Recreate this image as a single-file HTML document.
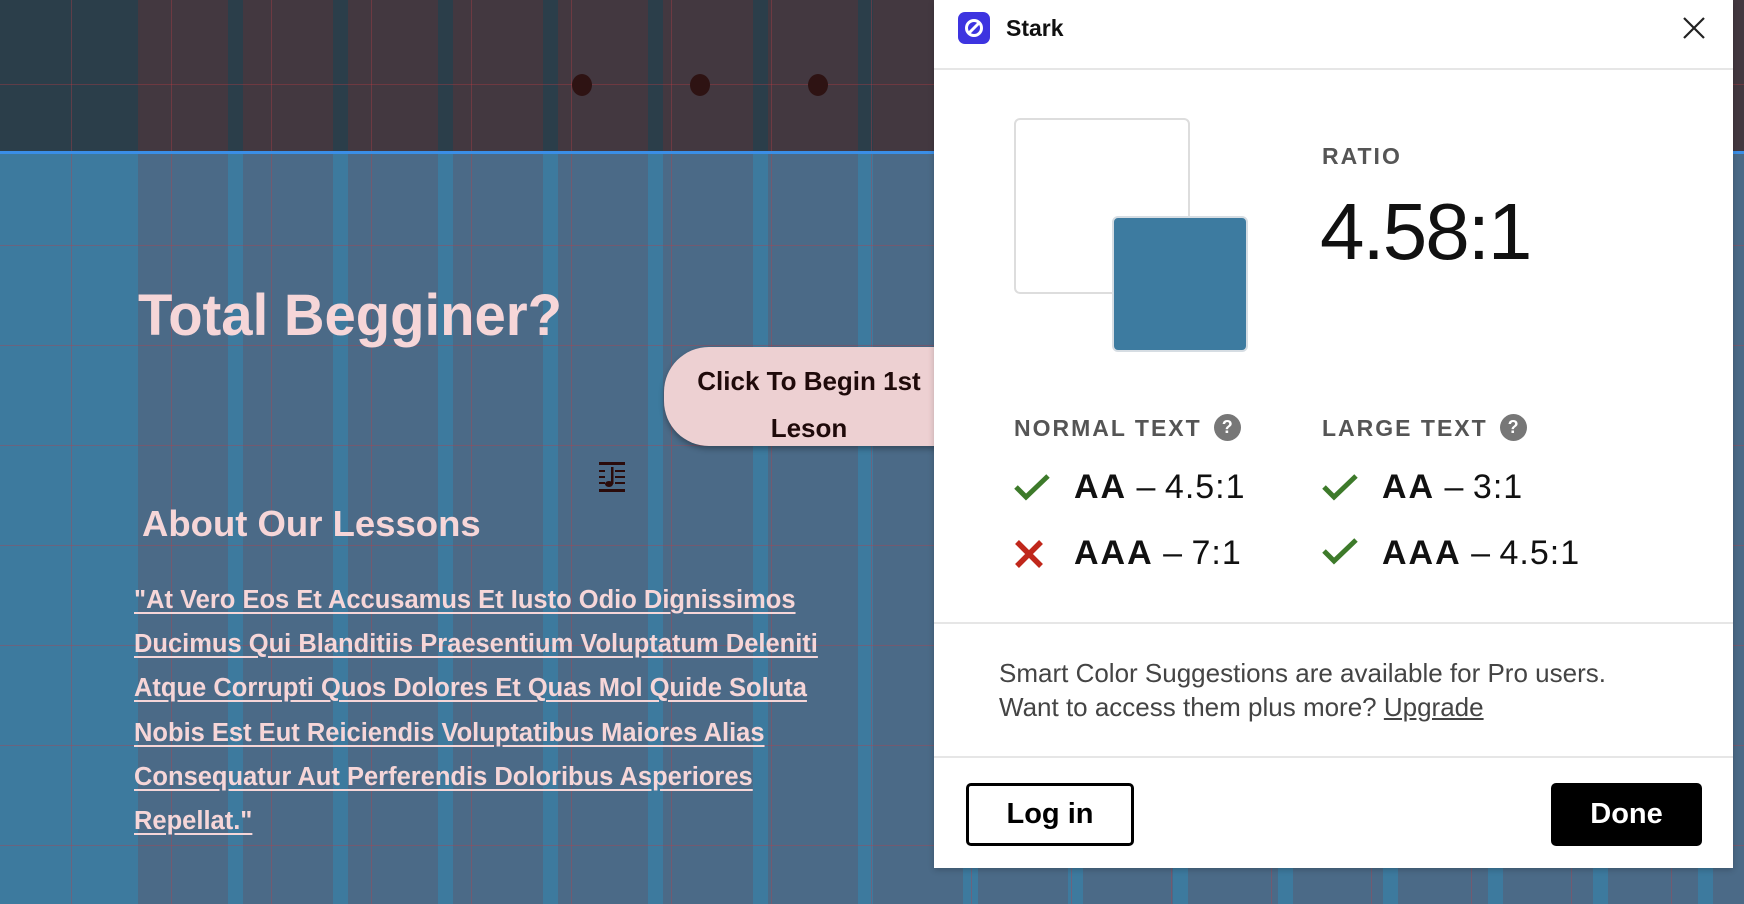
<!DOCTYPE html>
<html><head><meta charset="utf-8"><style>
*{margin:0;padding:0;box-sizing:border-box}
body{width:1744px;height:904px;overflow:hidden;position:relative;background:#3d7a9e;font-family:"Liberation Sans",sans-serif}
.abs{position:absolute}
.top{left:0;top:0;width:1744px;height:152px;background:#2b3e4a}
.topcols{left:138px;top:0;width:1606px;height:152px;background:repeating-linear-gradient(90deg,#433840 0 90px,transparent 90px 105px)}
.botcols{left:138px;top:152px;width:1606px;height:752px;background:repeating-linear-gradient(90deg,#4b6a87 0 90px,transparent 90px 105px)}
.vl{left:71px;top:0;width:1673px;height:904px;background:repeating-linear-gradient(90deg,rgba(190,60,70,.35) 0 1px,transparent 1px 100px)}
.hl{left:0;top:245px;width:1744px;height:659px;background:repeating-linear-gradient(180deg,rgba(190,60,70,.35) 0 1px,transparent 1px 100px)}
.hl0{left:0;top:84px;width:1744px;height:1px;background:rgba(190,60,70,.35)}
.blue{left:0;top:151px;width:1744px;height:3px;background:#3a8ee6}
.dot{width:20px;height:22px;border-radius:50%;background:#2e1313;top:74px}
.cond{font-family:"Liberation Sans",sans-serif;font-weight:bold;color:#f6d6d8;transform-origin:0 0}
.panel{left:934px;top:0;width:799px;height:868px;background:#fff;box-shadow:0 2px 6px rgba(0,0,0,.2)}
.sep{position:absolute;left:0;width:799px;height:2px;background:#e6e6e6}
.lbl{position:absolute;font-weight:bold;color:#555;font-size:23px;letter-spacing:2px}
.q{display:inline-block;width:27px;height:27px;border-radius:50%;background:#777;color:#fff;font-size:18px;text-align:center;line-height:27px;vertical-align:3px;margin-left:12px;letter-spacing:0}
.row{position:absolute;font-size:34px;color:#111;white-space:nowrap}
.row b{letter-spacing:2px}
.row span{letter-spacing:1px}
</style></head><body>
<div class="abs top"></div><div class="abs topcols"></div><div class="abs botcols"></div>
<div class="abs vl"></div><div class="abs hl"></div><div class="abs hl0"></div><div class="abs blue"></div>
<div class="abs dot" style="left:572px"></div><div class="abs dot" style="left:690px"></div><div class="abs dot" style="left:808px"></div>

<div class="abs cond" style="left:138px;top:282px;font-size:58px;white-space:nowrap;transform:scaleX(.97)">Total Begginer?</div>
<div class="abs" style="left:664px;top:347px;width:290px;height:99px;background:#edd0d2;border-radius:45px 0 0 45px;box-shadow:0 3px 6px rgba(0,0,0,.3)"></div>
<div class="abs" style="left:664px;top:358px;width:280px;text-align:center;color:#1f0a0a;font-size:26px;font-weight:bold;line-height:47px;padding-left:10px">Click To Begin 1st<br>Leson</div>
<svg class="abs" style="left:598px;top:462px" width="28" height="30" viewBox="0 0 28 30"><g fill="#2a0b0b"><rect x="1" y="0" width="26" height="3"/><rect x="1" y="27" width="26" height="3"/><rect x="1" y="8" width="6" height="2"/><rect x="1" y="14" width="6" height="2"/><rect x="1" y="20" width="6" height="2"/><rect x="17" y="8" width="10" height="2"/><rect x="17" y="14" width="10" height="2"/><rect x="17" y="20" width="10" height="2"/><rect x="13" y="5" width="2.5" height="17"/><ellipse cx="11" cy="22" rx="4" ry="3"/></g></svg>
<div class="abs cond" style="left:142px;top:503px;font-size:36.5px;white-space:nowrap">About Our Lessons</div>
<div class="abs cond" style="left:134px;top:578px;font-size:25.5px;line-height:44.2px;text-decoration:underline;text-underline-offset:4px;white-space:nowrap">"At Vero Eos Et Accusamus Et Iusto Odio Dignissimos<br>Ducimus Qui Blanditiis Praesentium Voluptatum Deleniti<br>Atque Corrupti Quos Dolores Et Quas Mol Quide Soluta<br>Nobis Est Eut Reiciendis Voluptatibus Maiores Alias<br>Consequatur Aut Perferendis Doloribus Asperiores<br>Repellat."</div>

<div class="abs panel">
 <div style="position:absolute;left:24px;top:12px;width:32px;height:32px;border-radius:7px;background:#3d34e0"></div>
 <svg style="position:absolute;left:24px;top:12px" width="32" height="32" viewBox="0 0 32 32"><circle cx="16" cy="16" r="7.5" fill="none" stroke="#fff" stroke-width="3"/><line x1="11" y1="21" x2="21" y2="11" stroke="#fff" stroke-width="3"/></svg>
 <div style="position:absolute;left:72px;top:15px;font-size:23px;font-weight:bold;color:#111">Stark</div>
 <svg style="position:absolute;left:748px;top:16px" width="24" height="24" viewBox="0 0 24 24"><path d="M2 2L22 22M22 2L2 22" stroke="#222" stroke-width="2.2"/></svg>
 <div class="sep" style="top:68px"></div>
 <div style="position:absolute;left:80px;top:118px;width:176px;height:176px;border:2px solid #ddd;border-radius:6px;background:#fff"></div>
 <div style="position:absolute;left:178px;top:216px;width:136px;height:136px;border:2px solid #d6dde3;border-radius:6px;background:#3d7ba0"></div>
 <div class="lbl" style="left:388px;top:143px">RATIO</div>
 <div style="position:absolute;left:386px;top:186px;font-size:80px;font-weight:300;color:#111;letter-spacing:-2px">4.58:1</div>
 <div class="lbl" style="left:80px;top:414px">NORMAL TEXT<span class="q">?</span></div>
 <div class="lbl" style="left:388px;top:414px">LARGE TEXT<span class="q">?</span></div>
 <svg style="position:absolute;left:80px;top:472px" width="36" height="30" viewBox="0 0 36 30"><path d="M2 15L12 25L34 4" fill="none" stroke="#3d7a2a" stroke-width="5"/></svg>
 <svg style="position:absolute;left:80px;top:540px" width="30" height="28" viewBox="0 0 30 28"><path d="M3 2L27 26M27 2L3 26" stroke="#c0271b" stroke-width="5.5"/></svg>
 <svg style="position:absolute;left:388px;top:472px" width="36" height="30" viewBox="0 0 36 30"><path d="M2 15L12 25L34 4" fill="none" stroke="#3d7a2a" stroke-width="5"/></svg>
 <svg style="position:absolute;left:388px;top:536px" width="36" height="30" viewBox="0 0 36 30"><path d="M2 15L12 25L34 4" fill="none" stroke="#3d7a2a" stroke-width="5"/></svg>
 <div class="row" style="left:140px;top:468px"><b>AA</b> – <span>4.5:1</span></div>
 <div class="row" style="left:140px;top:534px"><b>AAA</b> – <span>7:1</span></div>
 <div class="row" style="left:448px;top:468px"><b>AA</b> – <span>3:1</span></div>
 <div class="row" style="left:448px;top:534px"><b>AAA</b> – <span>4.5:1</span></div>
 <div class="sep" style="top:622px"></div>
 <div style="position:absolute;left:65px;top:656px;font-size:26px;line-height:34px;color:#444;white-space:nowrap">Smart Color Suggestions are available for Pro users.<br>Want to access them plus more? <u>Upgrade</u></div>
 <div class="sep" style="top:756px"></div>
 <div style="position:absolute;left:32px;top:783px;width:168px;height:63px;border:3px solid #000;border-radius:5px;text-align:center;line-height:57px;font-size:29px;font-weight:bold;color:#000">Log in</div>
 <div style="position:absolute;left:617px;top:783px;width:151px;height:63px;background:#000;border-radius:5px;text-align:center;line-height:63px;font-size:29px;font-weight:bold;color:#fff">Done</div>
</div>
</body></html>
